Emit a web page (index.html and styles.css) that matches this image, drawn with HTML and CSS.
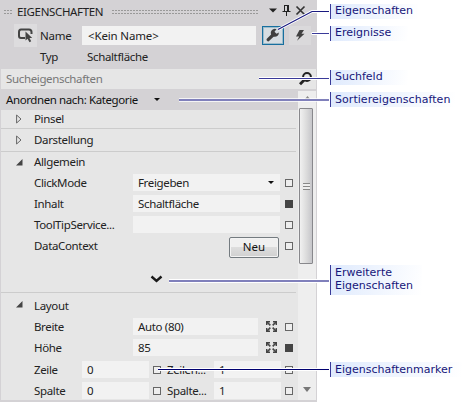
FILE: index.html
```html
<!DOCTYPE html>
<html lang="de">
<head>
<meta charset="utf-8">
<title>Eigenschaften</title>
<link rel="stylesheet" href="styles.css">
</head>
<body>
<div class="page">
  <section class="panel">
    <header class="titlebar">
      <span class="grip grip-small"></span>
      <span class="title">EIGENSCHAFTEN</span>
      <span class="grip grip-long"></span>
      <svg class="window-icons" width="40" height="14" viewBox="0 0 40 14">
        <path d="M1 4.500h8L5 8.500z" fill="#222"/>
        <path d="M16.500 1v6M16 1.500h4M19.500 1v6M20.500 1v6M14.500 7.500h8M18.500 8v4" fill="none" stroke="#222" stroke-width="1"/>
        <path d="M28.500 2.500l8 8M36.500 2.500l-8 8" fill="none" stroke="#333" stroke-width="1.700"/>
      </svg>
    </header>
    <div class="name-row">
      <span class="type-icon">
        <svg width="23" height="23" viewBox="0 0 23 23">
          <path d="M11 14H7Q5 14 5 12V8Q5 5.500 7 5.500H15Q17.500 5.500 17.500 8V10" fill="none" stroke="#444" stroke-width="2"/>
          <path d="M11.500 7.500v9l2-1.800 2 3.500 1.700-1-1.700-3.200h2.700z" fill="#444"/>
        </svg>
      </span>
      <span class="name-label">Name</span>
      <span class="field name-field">&lt;Kein Name&gt;</span>
      <span class="tool tool-active">
        <svg width="14" height="14" viewBox="0 0 14 14">
          <path d="M2.200 11.700L7 7" stroke="#404040" stroke-width="3.200" stroke-linecap="round"/>
          <path d="M10.500 1.200A4 4 0 1 0 12.800 4.500L10.500 5.800 8.500 3.700z" fill="#404040"/>
        </svg>
      </span>
      <span class="tool">
        <svg width="14" height="14" viewBox="0 0 14 14"><path d="M6.500 2h4.500L8.500 5.800H11.500L4 12.800 6.200 8.600H3z" fill="#404040"/></svg>
      </span>
    </div>
    <div class="type-row"><span class="type-label">Typ</span><span>Schaltfläche</span></div>
    <div class="search">
      <span>Sucheigenschaften</span>
      <svg width="16" height="16" viewBox="0 0 16 16"><circle cx="10" cy="6" r="3.900" fill="none" stroke="#222" stroke-width="2"/><path d="M7.200 9L3 13.200" stroke="#222" stroke-width="2.800"/></svg>
    </div>
    <div class="body">
      <div class="list">
        <div class="sort"><span>Anordnen nach: Kategorie</span><svg width="6" height="3" viewBox="0 0 6 3"><path d="M0 0h6L3 3z" fill="#111"/></svg></div>
        <div class="group group-first"><svg class="twisty" width="6" height="10" viewBox="0 0 6 10"><path d="M.6 1v8L5 5z" fill="none" stroke="#666"/></svg>Pinsel</div>
        <div class="group group-second"><svg class="twisty" width="6" height="10" viewBox="0 0 6 10"><path d="M.6 1v8L5 5z" fill="none" stroke="#666"/></svg>Darstellung</div>
        <div class="group-open"><svg class="twisty twisty-open" width="7" height="7" viewBox="0 0 7 7"><path d="M6.500 0v6.500H0z" fill="#444"/></svg>Allgemein</div>
        <div class="row"><span class="label">ClickMode</span><span class="field wide select">Freigeben <svg width="6" height="3" viewBox="0 0 6 3"><path d="M0 0h6L3 3z" fill="#111"/></svg></span><i class="marker"></i></div>
        <div class="row"><span class="label">Inhalt</span><span class="field wide">Schaltfläche</span><i class="marker marker-set"></i></div>
        <div class="row row-tip"><span class="label">ToolTipService...</span><span class="field wide"></span><i class="marker"></i></div>
        <div class="row row-context"><span class="label">DataContext</span><span class="wide button-cell"><button class="new">Neu</button></span><i class="marker"></i></div>
        <div class="more"><svg width="13" height="9" viewBox="0 0 13 9"><path d="M1.500 1.500l5 4.500L11.500 1.500" fill="none" stroke="#1a1a1a" stroke-width="2.400"/></svg></div>
        <div class="group-open group-layout"><svg class="twisty twisty-open" width="7" height="7" viewBox="0 0 7 7"><path d="M6.500 0v6.500H0z" fill="#444"/></svg>Layout</div>
        <div class="row"><span class="label">Breite</span><span class="field medium">Auto (80)</span><svg class="expand" width="11" height="11" viewBox="0 0 11 11"><path d="M1 1l9 9M10 1L1 10" stroke="#444" stroke-width="1.600" stroke-dasharray="4.700 3.300"/><path d="M.7 4V.7H4M7 .7h3.300V4M.7 7v3.300H4M7 10.300h3.300V7" fill="none" stroke="#444" stroke-width="1.500"/></svg><i class="marker"></i></div>
        <div class="row row-height"><span class="label">Höhe</span><span class="field medium">85</span><svg class="expand" width="11" height="11" viewBox="0 0 11 11"><path d="M1 1l9 9M10 1L1 10" stroke="#444" stroke-width="1.600" stroke-dasharray="4.700 3.300"/><path d="M.7 4V.7H4M7 .7h3.300V4M.7 7v3.300H4M7 10.300h3.300V7" fill="none" stroke="#444" stroke-width="1.500"/></svg><i class="marker marker-set"></i></div>
        <div class="row split"><span class="label">Zeile</span><span class="field short">0</span><i class="marker"></i><span class="label-two">Zeilen...</span><span class="field short">1</span><i class="marker"></i></div>
        <div class="row split"><span class="label">Spalte</span><span class="field short">0</span><i class="marker"></i><span class="label-two">Spalte...</span><span class="field short">1</span><i class="marker"></i></div>
      </div>
      <div class="scrollbar">
        <svg width="5" height="3" viewBox="0 0 5 3"><path d="M0 3h5L2.500 0z" fill="#888"/></svg>
        <div class="thumb"><span></span></div>
        <svg class="arrow-down" width="8" height="5" viewBox="0 0 8 5"><path d="M0 0h8L4 5z" fill="#777"/></svg>
      </div>
    </div>
  </section>
  <aside class="notes">
    <div class="note n-props">Eigenschaften</div>
    <div class="note n-events">Ereignisse</div>
    <div class="note n-search">Suchfeld</div>
    <div class="note n-sort">Sortiereigenschaften</div>
    <div class="note n-more">Erweiterte<br>Eigenschaften</div>
    <div class="note n-marker">Eigenschaftenmarker</div>
  </aside>
  <svg class="leaders" width="462" height="402" viewBox="0 0 462 402" fill="none">
    <g stroke="#fff" stroke-width="3">
      <path d="M278 29.500L312 11.500H329"/><path d="M311.500 33.500H329"/><path d="M259 78.500H329"/><path d="M179 100H329" stroke-width="3.400"/><path d="M169 281H329" stroke-width="4"/><path d="M158 369.500H329"/>
    </g>
    <path d="M278 29.500L312 11.500H329" stroke="#1a1a80" stroke-width="1.200"/>
    <path d="M312 33.500H329" stroke="#3a3a99"/>
    <path d="M259 78.500H329" stroke="#3a3a99"/>
    <path d="M179 100H329" stroke="#8080bb" stroke-width="2"/>
    <path d="M169 281H329" stroke="#8080bb" stroke-width="2"/>
    <path d="M158 369.500H329" stroke="#000070"/>
  </svg>
</div>
</body>
</html>
```
FILE: styles.css
```css
* { box-sizing: border-box; }
body { margin: 0; background: #fff; font: 11.5px/18px "Noto Sans", sans-serif; color: #222; letter-spacing: -0.35px; }
svg { flex: none; }
.page { position: relative; display: flex; width: 462px; height: 402px; overflow: hidden; }
.panel { width: 317px; height: 402px; background: #d4d2d5; white-space: nowrap; flex: none; }
.titlebar { display: flex; align-items: center; height: 24px; padding-left: 4px; }
.title { width: 85px; margin-left: 5px; }
.grip { height: 4px; margin-top: -1px; background: repeating-linear-gradient(90deg, #999 0 2px, transparent 2px 3px) 0 0 / 100% 1px no-repeat, repeating-linear-gradient(90deg, #999 0 2px, transparent 2px 3px) 0 3px / 100% 1px no-repeat; }
.grip-small { width: 8px; }
.grip-long { width: 146px; margin-left: 10px; }
.window-icons { margin: -3px 0 0 10px; }
.name-row { display: flex; height: 23px; align-items: center; padding-left: 14px; }
.type-icon { width: 23px; height: 23px; background: #dddcde; }
.type-icon svg { display: block; }
.name-label { width: 42px; margin-left: 3px; letter-spacing: -.2px; }
.field { background: #f2f2f2; padding-left: 5px; height: 17px; line-height: 17px; }
.name-field { width: 174px; height: 19px; margin-top: -1px; padding-left: 6px; line-height: 19px; letter-spacing: -.15px; }
.tool { width: 22px; height: 19px; margin: -1px 0 0 5px; display: grid; place-items: center; background: #dad9db; }
.tool-active { margin-left: 6px; border: 1px solid #176f9f; box-shadow: inset 0 0 0 1px #9dbccb; background: #d6dde2; }
.type-row { display: flex; height: 22px; line-height: 20px; padding-left: 40px; }
.type-label { width: 47px; }
.search { display: flex; justify-content: space-between; align-items: center; width: 315px; height: 20px; margin-left: 1px; padding: 0 3px 0 5px; background: #e6e6e6; color: #777; }
.body { display: flex; margin-left: 1px; width: 315px; }
.list { width: 297px; height: 311px; background: #e6e6e6; }
.sort { display: flex; align-items: center; height: 21px; padding-left: 5px; background: #d4d2d5; color: #111; }
.sort span { width: 148px; letter-spacing: -.4px; }
.group { display: flex; align-items: center; padding-left: 15px; margin-right: 2px; border-bottom: 1px solid #ccc; }
.twisty { margin-right: 12px; }
.group-first { height: 19px; }
.group-second { height: 23px; }
.group-open { display: flex; align-items: center; height: 22px; padding: 0 0 2px 15px; }
.twisty-open { margin-right: 11px; }
.row { display: flex; align-items: center; height: 17px; margin-bottom: 4px; }
.label { width: 99px; margin-left: 33px; }
.wide { width: 147px; }
.medium { width: 125px; }
.short { width: 67px; }
.select { display: flex; align-items: center; justify-content: space-between; padding-right: 6px; }
.marker { width: 8px; height: 8px; margin-left: 5px; border: 1px solid #666; background: #eee; flex: none; }
.marker-set { background: #444; border-color: #444; }
.row-tip { margin: 4px 0 0; }
.row-context { height: 25px; margin: 0; }
.button-cell { display: flex; justify-content: flex-end; padding: 3px 1px 0 0; }
.new { width: 50px; height: 21px; padding: 0; border: 1px solid #747b80; border-radius: 2px; box-shadow: inset 0 0 0 1px #f3f3f3; background: linear-gradient(#f0f0f0 0 50%, #ddd 50%, #d0d0d0); font: inherit; line-height: 18px; color: #111; letter-spacing: 0; }
.more { height: 35px; margin-right: 2px; padding: 17px 0 0 149px; border-bottom: 1px solid #ccc; line-height: 0; }
.group-layout { height: 25px; padding-bottom: 0; }
.group-layout .twisty { margin-top: -3px; }
.expand { margin-left: 8px; }
.expand + .marker { margin-left: 8px; }
.row-height { margin-bottom: 5px; }
.split .label { width: 48px; }
.split .marker { margin-left: 4px; }
.label-two { width: 47px; margin-left: 6px; }
.scrollbar { display: flex; flex-direction: column; align-items: center; width: 18px; height: 309px; margin-top: 2px; padding: 5px 0 8px; background: #eee; }
.thumb { display: grid; place-items: center; width: 14px; height: 156px; margin: 9px 2px 0 0; border: 1px solid #88888c; border-radius: 1px; background: linear-gradient(90deg, #f1f1f1, #ddd 50%, #c6c6ca); }
.thumb span { width: 7px; height: 7px; background: repeating-linear-gradient(#888 0 1px, #eee 1px 3px); }
.arrow-down { margin: auto 1px 0 0; }
.notes { padding: 4px 0 0 13px; font: 11px/13px "DejaVu Sans", sans-serif; color: #16167a; letter-spacing: 0; }
.note { height: 15px; padding-left: 4px; border-left: 1px solid #3a3a99; background: linear-gradient(100deg, #dfeafd, #fff); line-height: 14px; white-space: nowrap; }
.n-props { width: 88px; }
.n-events { width: 78px; margin-top: 7px; }
.n-search { width: 78px; margin-top: 29px; }
.n-sort { width: 125px; margin-top: 7px; padding-top: 1px; letter-spacing: .05px; }
.n-more { width: 92px; height: 30px; margin-top: 158px; line-height: 13px; padding-top: 1px; }
.n-marker { width: 132px; margin-top: 67px; padding-top: 1px; }
.leaders { position: absolute; left: 0; top: 0; }
```
